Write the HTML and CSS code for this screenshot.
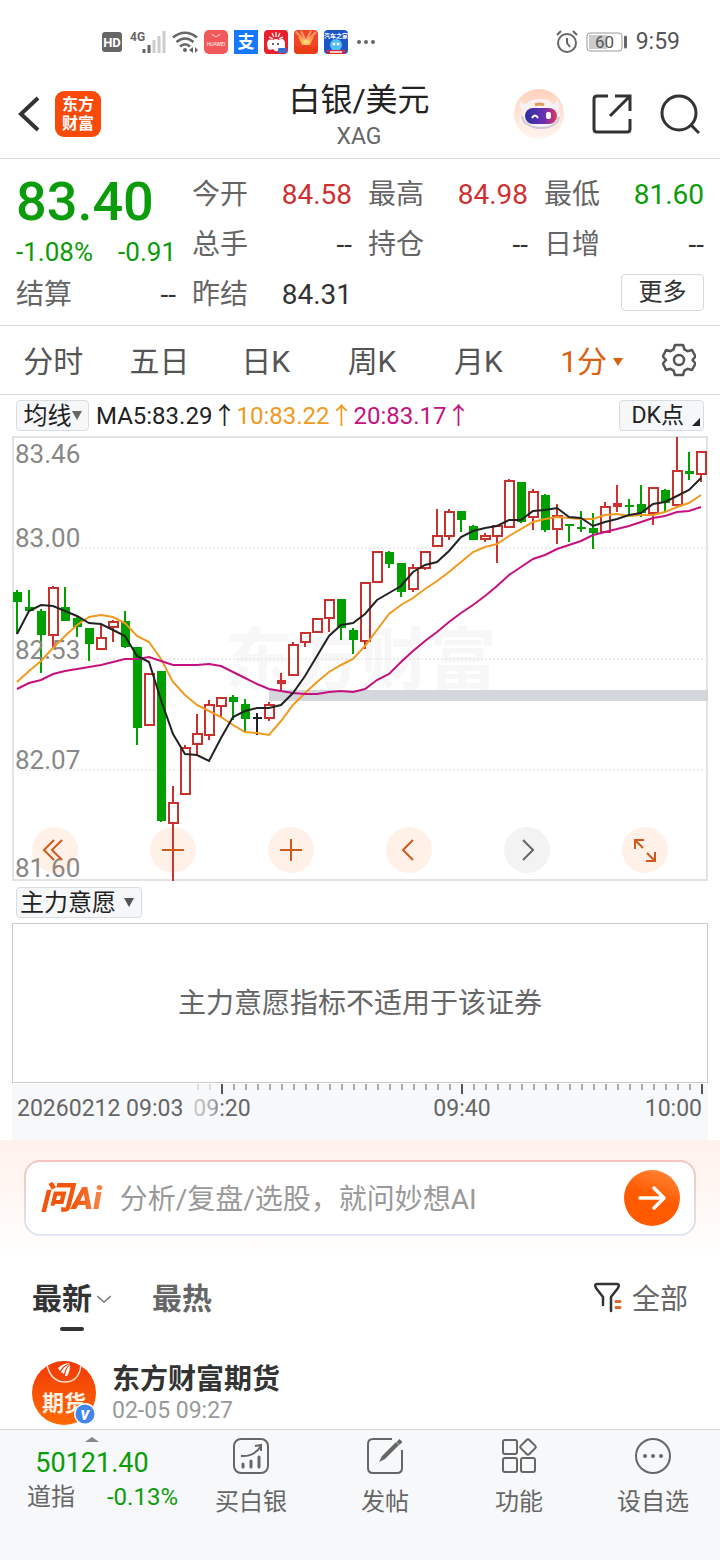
FILE: index.html
```html
<!DOCTYPE html>
<html lang="zh-CN">
<head>
<meta charset="utf-8">
<meta name="viewport" content="width=device-width, initial-scale=1">
<title>白银/美元 XAG</title>
<link rel="stylesheet" href="styles.css">
</head>
<body>

<div class="statusbar">
  <div class="status-left">
    <svg class="hd" width="20" height="20" viewBox="0 0 20 20"><rect width="20" height="20" rx="3" fill="#666"/><text x="10" y="15" text-anchor="middle" font-size="13" font-weight="700" fill="#fff">HD</text></svg>
    <svg class="signal" width="36" height="26" viewBox="0 0 36 26"><text x="0" y="12" font-size="12" font-weight="700" fill="#666">4G</text><path d="M14 24v-4M19 24v-8" stroke="#666" stroke-width="3"/><path d="M24 24V11M29 24V7M34 24V2" stroke="#ccc" stroke-width="3"/></svg>
    <svg class="wifi" width="26" height="24" viewBox="0 0 26 24" fill="none" stroke="#666" stroke-width="2.6"><path d="M1 7.500Q13-2 25 7.500M4.500 12Q13 5 21.500 12M8 16.500Q13 12 18 16.500"/><circle cx="13" cy="20" r="2" fill="#666" stroke="none"/><path d="M21 17v6l-4-3zM23 17v6l3-3z" fill="#666" stroke="none"/></svg>
    <svg class="app" viewBox="0 0 24 24"><rect width="24" height="24" rx="5" fill="#f0585c"/><path d="M8 4q4 5 8 0" fill="none" stroke="#fbd0d0" stroke-width="1.200"/><text x="12" y="16" text-anchor="middle" font-size="5" font-weight="400" fill="#fff">HUAWEI</text></svg>
    <svg class="app" viewBox="0 0 24 24"><rect width="24" height="24" fill="#1677ff"/><text x="12" y="18" text-anchor="middle" font-size="17" font-weight="700" fill="#fff">支</text></svg>
    <svg class="app" viewBox="0 0 24 24"><rect width="24" height="24" rx="4" fill="#e5202c"/><path d="M3 13q1-5 6-3 3-2 6 0 5-3 6 3v5q-6 5-17 2z" fill="#fff"/><path d="M8 3l2 4M12 2v5M16 3l-2 4M5 7l4 2M19 7l-4 2" stroke="#ffd9d9" stroke-width="1.500"/><circle cx="9" cy="14" r="1" fill="#333"/><circle cx="14" cy="14" r="1" fill="#333"/><path d="M1 18q5 3 8 1l3 3v2H4q-4 0-3-6z" fill="#e5202c"/><rect x="14" y="18" width="9" height="5" rx="1" fill="#3a6fd0"/></svg>
    <svg class="app" viewBox="0 0 24 24"><rect width="24" height="24" rx="4" fill="#f0452b"/><path d="M2 2l8 8M22 2l-8 8M7 1l4 8M17 1l-4 8" stroke="#ff9b64" stroke-width="2"/><path d="M4 6l5 4h6l5-4-4 9H8z" fill="#ffb347"/><circle cx="12" cy="12" r="3" fill="#ffd27a"/><path d="M0 15q6 4 12 1 6 3 12-1v6q-1 3-4 3H4q-3 0-4-3z" fill="#e93c14"/></svg>
    <svg class="app" viewBox="0 0 24 24"><rect width="24" height="24" rx="4" fill="#1d55c9"/><text x="12" y="8" text-anchor="middle" font-size="6" font-weight="700" fill="#fff">汽车之家</text><circle cx="12" cy="15" r="6" fill="#4fc0f5"/><circle cx="10" cy="14" r="1.500" fill="#fff"/><circle cx="14" cy="14" r="1.500" fill="#fff"/><path d="M2 20h20q-1 4-4 4H6q-3 0-4-4z" fill="#d92b3a"/><path d="M6 22h12" stroke="#fff" stroke-width="1.500"/></svg>
    <svg class="more-dots" width="18" height="4" viewBox="0 0 18 4" fill="#666"><circle cx="2" cy="2" r="2"/><circle cx="9" cy="2" r="2"/><circle cx="16" cy="2" r="2"/></svg>
  </div>
  <div class="status-right">
    <svg width="22" height="24" viewBox="0 0 22 24" fill="none" stroke="#666" stroke-width="2"><circle cx="11" cy="13" r="9"/><path d="M11 8v5l3 4M1 5l4-4M21 5l-4-4"/></svg>
    <svg width="42" height="20" viewBox="0 0 42 20"><rect x="1" y="1" width="35" height="18" rx="3" fill="#fff" stroke="#999"/><rect x="3" y="3" width="18" height="14" fill="#ccc"/><path d="M39.500 5v10" stroke="#666" stroke-width="3" stroke-linecap="round"/><text x="18.500" y="16" text-anchor="middle" font-size="17" fill="#555">60</text></svg>
    <span class="clock">9:59</span>
  </div>
</div>

<header class="header">
  <div class="header-left">
    <button class="icon-btn" aria-label="返回"><svg width="22" height="36" viewBox="0 0 22 36" fill="none" stroke="#333" stroke-width="4"><path d="M20 2L3 18l17 16"/></svg></button>
    <a class="brand" href="#">东方<br>财富</a>
  </div>
  <div class="header-title">
    <h1>白银/美元</h1>
    <p>XAG</p>
  </div>
  <div class="header-right">
    <button class="icon-btn" aria-label="AI助手">
      <svg width="50" height="50" viewBox="0 0 50 50">
        <defs>
          <linearGradient id="robotBg" x1="0" y1="0" x2="0" y2="1"><stop offset="0" stop-color="#ffd2bb"/><stop offset="1" stop-color="#fff5f0"/></linearGradient>
          <linearGradient id="visor"><stop offset="0" stop-color="#2e2f9e"/><stop offset=".6" stop-color="#6a2fb4"/><stop offset="1" stop-color="#e2385c"/></linearGradient>
        </defs>
        <circle cx="25" cy="25" r="25" fill="url(#robotBg)"/>
        <path d="M6 11q1 4 6 4 5-5 14-5t13 5q4 0 4-5 4 6 1 12 3 4 2 10-1 4-5 4-6 5-15 5t-14-5q-6 0-6-6 0-4 3-7-5-6-3-12z" fill="#f5f1f4"/>
        <path d="M8 27q1 6 5 8 6 4 14 4t14-4q3-2 4-7" stroke="#cfc6d2" stroke-width="2" fill="none"/>
        <path d="M21 16q5-2 9 0" stroke="#e39b5c" stroke-width="3" fill="none"/>
        <rect x="11" y="19" width="32" height="16" rx="8" fill="url(#visor)"/>
        <path d="M18 29q3-5 6 0" stroke="#fff" stroke-width="2" fill="none"/>
        <rect x="32" y="23" width="5" height="7" rx="2" fill="#fff"/>
      </svg>
    </button>
    <button class="icon-btn" aria-label="分享"><svg width="40" height="40" viewBox="0 0 40 40" fill="none" stroke="#333" stroke-width="3"><path d="M16 2H5Q2 2 2 5v30q0 3 3 3h30q3 0 3-3V25"/><path d="M23 2h15v15M37 3L18 22"/></svg></button>
    <button class="icon-btn" aria-label="搜索"><svg width="40" height="40" viewBox="0 0 40 40" fill="none" stroke="#333" stroke-width="3"><circle cx="19" cy="19" r="17"/><path d="M31 31l8 8"/></svg></button>
  </div>
</header>

<section class="quote">
  <div class="last">
    <strong class="price">83.40</strong>
    <div class="change"><span>-1.08%</span><span>-0.91</span></div>
  </div>
  <div class="cell"><span>今开</span><b class="up">84.58</b></div>
  <div class="cell"><span>最高</span><b class="up">84.98</b></div>
  <div class="cell"><span>最低</span><b class="down">81.60</b></div>
  <div class="cell"><span>总手</span><b>--</b></div>
  <div class="cell"><span>持仓</span><b>--</b></div>
  <div class="cell"><span>日增</span><b>--</b></div>
  <div class="cell"><span>结算</span><b>--</b></div>
  <div class="cell"><span>昨结</span><b>84.31</b></div>
  <div class="cell cell-more"><button class="more">更多</button></div>
</section>

<nav class="periods">
  <button>分时</button>
  <button>五日</button>
  <button>日K</button>
  <button>周K</button>
  <button>月K</button>
  <button class="active">1分<svg width="10" height="8" viewBox="0 0 10 8"><path d="M0 0h10L5 8z" fill="#d9600f"/></svg></button>
  <button class="gear" aria-label="设置"><svg width="34" height="34" viewBox="0 0 34 34" fill="none" stroke="#555" stroke-width="2.500" stroke-linejoin="round"><path d="M13 2h8l1.500 4.500 3 1.700L30 7l3.500 6.500-3 3.500 3 3.500L30 27l-4.500-1.200-3 1.700L21 32h-8l-1.500-4.500-3-1.700L4 27 .9 20.500 4 17 .9 13.500 4 7l4.500 1.200 3-1.700z"/><circle cx="17" cy="17" r="5"/></svg></button>
</nav>

<section class="indicator">
  <button class="tag">均线<svg width="10" height="9" viewBox="0 0 10 9"><path d="M0 0h10L5 9z" fill="#666"/></svg></button>
  <p class="ma"><span>MA5:83.29↑</span><span class="ma10">10:83.22↑</span><span class="ma20">20:83.17↑</span></p>
  <button class="tag tag-dk">DK点<svg width="8" height="8" viewBox="0 0 8 8"><path d="M8 0v8H0z" fill="#222"/></svg></button>
</section>

<section class="chart">
  <svg class="kline" id="kline" viewBox="12 436 696 446">
    <text class="watermark" x="225" y="684">东方财富</text>
    <path class="grid" d="M13 548H707M13 659H707M13 770H707"/>
    <path class="frame" d="M13 437H707V880H13Z"/>
    <rect x="269" y="690" width="439" height="11" fill="#d3d6db"/>
    <g id="candles"></g>
    <g class="scale">
      <text x="15" y="463">83.46</text>
      <text x="15" y="547">83.00</text>
      <text x="15" y="659">82.53</text>
      <text x="15" y="769">82.07</text>
      <text x="15" y="877">81.60</text>
    </g>
    <g id="lines"></g>
  </svg>
  <div class="chart-tools">
    <button aria-label="最左"><svg viewBox="0 0 46 46"><path d="M22 13L12 23l10 10M30 13L20 23l10 10"/></svg></button>
    <button aria-label="缩小"><svg viewBox="0 0 46 46"><path d="M12 23h22"/></svg></button>
    <button aria-label="放大"><svg viewBox="0 0 46 46"><path d="M12 23h22M23 12v22"/></svg></button>
    <button aria-label="左移"><svg viewBox="0 0 46 46"><path d="M27 13L17 23l10 10"/></svg></button>
    <button class="off" aria-label="右移"><svg viewBox="0 0 46 46"><path d="M19 13l10 10-10 10"/></svg></button>
    <button aria-label="全屏"><svg viewBox="0 0 46 46"><path d="M13 22v-9h9M13 13l8 8M33 25v9h-9M33 34l-8-8"/></svg></button>
  </div>
</section>

<section class="sub">
  <button class="tag tag-sub">主力意愿<svg width="10" height="9" viewBox="0 0 10 9"><path d="M0 0h10L5 9z" fill="#555"/></svg></button>
  <p class="sub-empty">主力意愿指标不适用于该证券</p>
  <svg class="axis" viewBox="12 1084 696 56">
    <defs><linearGradient id="fade"><stop offset="0" stop-color="#ccc"/><stop offset=".35" stop-color="#aaa"/><stop offset=".5" stop-color="#666"/></linearGradient></defs>
    <g id="ticks"></g>
    <text x="17" y="1116">20260212 09:03</text>
    <text x="222" y="1116" text-anchor="middle" fill="url(#fade)">09:20</text>
    <text x="462" y="1116" text-anchor="middle">09:40</text>
    <text x="702" y="1116" text-anchor="end">10:00</text>
  </svg>
</section>

<section class="ask">
  <form class="ask-box">
    <label class="ask-logo" for="ask">问Ai</label>
    <input id="ask" type="text" placeholder="分析/复盘/选股，就问妙想AI">
    <button type="button" class="send" aria-label="发送"><svg width="30" height="26" viewBox="0 0 30 26" fill="none" stroke="#fff" stroke-width="3.500" stroke-linecap="round" stroke-linejoin="round"><path d="M3 13h24M17 3l10 10-10 10"/></svg></button>
  </form>
</section>

<main class="feed">
  <div class="feed-tabs">
    <button class="feed-tab current">最新<svg width="14" height="8" viewBox="0 0 14 8" fill="none" stroke="#777" stroke-width="1.500"><path d="M0 1l7 6 7-6"/></svg></button>
    <button class="feed-tab">最热</button>
    <button class="filter"><svg width="30" height="32" viewBox="0 0 30 32" fill="none" stroke="#333" stroke-width="2.500" stroke-linecap="round" stroke-linejoin="round"><path d="M10 23v-8L3 6Q1 2 4 2h20q3 0 1 4l-7 9v14"/><path d="M23 19.500h4M23 25.500h4" stroke="#d9692c" stroke-width="3"/></svg>全部</button>
  </div>
  <article class="post">
    <svg class="avatar" viewBox="0 0 64 64">
      <defs><linearGradient id="av" x1="0" y1="0" x2="0" y2="1"><stop offset="0" stop-color="#f03a08"/><stop offset="1" stop-color="#ff6a00"/></linearGradient></defs>
      <circle cx="32" cy="32" r="32" fill="url(#av)"/>
      <path d="M15 4q4 17 18 17T49 4" fill="none" stroke="#ffe0d0" stroke-width="1.500"/>
      <path d="M26 7q6-5 12-5-7 2-10 8zM29 11q4-7 9-8-5 4-6 10zM33 15q1-8 5-11 0 7-3 11z" fill="#fff"/>
      <text x="32" y="50" text-anchor="middle" font-size="22" font-weight="700" fill="#fff3e6">期货</text>
      <circle cx="53" cy="53" r="11" fill="#fff"/><circle cx="53" cy="53" r="9.500" fill="#4385ea"/>
      <text x="53" y="59" text-anchor="middle" font-size="18" font-style="italic" font-weight="700" fill="#fff">v</text>
    </svg>
    <div>
      <h2>东方财富期货</h2>
      <time>02-05 09:27</time>
    </div>
  </article>
</main>

<footer class="bottombar">
  <a class="index" href="#">
    <svg width="14" height="5" viewBox="0 0 14 5"><path d="M0 5l7-5 7 5z" fill="#888"/></svg>
    <strong>50121.40</strong>
    <span class="index-row"><span>道指</span><em>-0.13%</em></span>
  </a>
  <button><svg viewBox="0 0 36 36"><rect x="1" y="1" width="34" height="34" rx="7"/><path d="M8 18q13 1 20-10M22 8l6-1v6"/><path d="M10 26v3M18 23v6M26 19v10" stroke-width="3" stroke-linecap="round"/></svg>买白银</button>
  <button><svg viewBox="0 0 36 36"><path d="M25 1H6Q1 1 1 6v24q0 5 5 5h24q5 0 5-5V12"/><path d="M12 24l3-6L29 4l3 3-14 14z" fill="#666" stroke="none"/><path d="M31 2.500l3 3" stroke-width="4"/></svg>发帖</button>
  <button><svg viewBox="0 0 36 36"><rect x="2" y="2" width="14" height="14" rx="2"/><rect x="2" y="20" width="14" height="14" rx="2"/><rect x="20" y="20" width="14" height="14" rx="2"/><rect x="21" y="3" width="12" height="12" rx="2" transform="rotate(45 27 9)"/></svg>功能</button>
  <button><svg viewBox="0 0 36 36"><circle cx="18" cy="18" r="17"/><g fill="#666" stroke="none"><circle cx="10" cy="18" r="2"/><circle cx="18" cy="18" r="2"/><circle cx="26" cy="18" r="2"/></g></svg>设自选</button>
</footer>

<script type="text/javascript">
// one row per minute from 09:03: [kind, high, body top, body bottom, low]
// g = falling, r = rising (hollow), s = rising (flat), k = unchanged
var candles = [
  ['g',590,592,602,634],['g',590,607,611,611],['g',609,611,635,673],['r',586,587,636,648],
  ['g',587,607,621,621],['g',617,618,627,637],['g',628,628,644,661],['r',624,637,650,650],
  ['r',620,621,628,642],['g',611,621,647,648],['g',647,647,728,745],['r',673,673,726,726],
  ['g',671,671,821,822],['r',786,802,824,881],['r',745,747,795,795],['r',714,733,745,754],
  ['r',700,704,736,740],['r',697,697,707,718],['g',695,697,702,720],['g',699,704,719,733],
  ['k',713,717,719,735],['r',702,704,719,721],['s',673,680,684,690],['r',642,644,676,676],
  ['r',632,632,643,647],['r',618,618,633,633],['r',599,599,619,632],['g',599,599,628,640],
  ['g',628,630,640,654],['r',582,582,642,649],['r',551,551,583,583],['g',551,552,564,568],
  ['g',563,563,592,597],['r',564,567,590,592],['r',551,551,569,570],['r',509,535,547,547],
  ['r',509,511,537,540],['g',511,511,520,532],['g',525,526,540,540],['r',533,535,540,542],
  ['r',525,525,537,563],['r',479,480,528,528],['g',482,482,522,523],['r',489,491,518,530],
  ['g',494,495,530,532],['r',504,515,530,544],['g',524,524,526,542],['g',511,527,529,532],
  ['g',513,528,533,549],['r',502,506,533,533],['s',485,503,507,512],['g',499,505,507,515],
  ['g',485,504,513,517],['r',487,487,514,525],['g',489,490,503,512],['r',437,470,506,506],
  ['g',452,471,474,480],['r',451,451,475,482]
];

var averages = {
  '#f09a20': [682,671,661,648,636,625,617,615,617,623,636,642,659,682,695,705,711,717,725,732,733,735,721,705,693,682,672,665,659,646,630,614,605,598,589,581,572,562,552,547,544,536,529,522,519,517,518,519,519,515,514,516,515,515,512,507,503,495],
  '#c5127f': [689,683,680,674,671,669,667,665,662,659,659,657,661,665,665,665,664,666,672,678,684,689,691,693,694,694,692,691,692,689,680,674,662,651,641,632,622,613,605,596,586,575,567,559,555,549,545,541,535,532,529,526,522,518,516,512,511,507],
  '#222222': [634,611,605,606,611,616,623,624,630,636,656,662,700,734,754,755,761,738,717,711,708,708,705,693,676,656,636,625,623,614,600,593,586,572,565,562,551,537,531,528,526,520,520,511,510,508,517,518,526,522,519,515,513,504,502,496,490,478]
};

var colors = { g: '#00a000', r: '#c8322e', s: '#d03030', k: '#222' };
var step = 12;
var firstX = 17;

function drawCandles() {
  var out = '';
  for (var i = 0; i < candles.length; i++) {
    var c = candles[i];
    var x = firstX + i * step;
    var color = colors[c[0]];
    if (c[0] == 'r') {
      out += '<path d="M' + x + ' ' + c[1] + 'V' + c[2] + 'M' + x + ' ' + c[3] + 'V' + c[4] + '" stroke="' + color + '" stroke-width="2"/>';
      out += '<rect x="' + (x - 4) + '" y="' + (c[2] + 1) + '" width="9" height="' + (c[3] - c[2] - 2) + '" fill="none" stroke="' + color + '" stroke-width="2"/>';
    } else {
      out += '<path d="M' + x + ' ' + c[1] + 'V' + c[4] + '" stroke="' + color + '" stroke-width="2"/>';
      out += '<rect x="' + (x - 4) + '" y="' + c[2] + '" width="9" height="' + (c[3] - c[2]) + '" fill="' + color + '"/>';
    }
  }
  document.getElementById('candles').innerHTML = out;
}

function drawLines() {
  var out = '';
  for (var color in averages) {
    var points = averages[color].map(function (y, i) {
      return (firstX + i * step) + ',' + y;
    });
    out += '<polyline points="' + points.join(' ') + '" fill="none" stroke="' + color + '" stroke-width="2"/>';
  }
  document.getElementById('lines').innerHTML = out;
}

function drawTicks() {
  var out = '';
  for (var i = 15; i < candles.length; i++) {
    var x = firstX + i * step + 1;
    var major = (i + 3) % 20 == 0;
    var color = major ? '#555' : (i < 17 ? '#ddd' : '#aaa');
    out += '<path d="M' + x + ' 1084v' + (major ? 10 : 6) + '" stroke="' + color + '" stroke-width="2"/>';
  }
  document.getElementById('ticks').innerHTML = out;
}

drawCandles();
drawLines();
drawTicks();
</script>
</body>
</html>
```
FILE: styles.css
```css
* {
  box-sizing: border-box;
}
body {
  margin: 0;
  min-height: 100vh;
  display: flex;
  flex-direction: column;
  background-color: #fff;
  color: #333;
  font-family: Roboto, "Noto Sans CJK SC", sans-serif;
  font-size: 24px;
  line-height: 32px;
}
h1, h2, p {
  margin: 0;
  font-weight: 400;
}
button, input {
  font: inherit;
  color: inherit;
  padding: 0;
  border: 0;
  background: none;
}
a {
  color: inherit;
  text-decoration: none;
}
svg {
  display: block;
  flex: none;
}

/* status bar */
.statusbar {
  display: flex;
  justify-content: space-between;
  align-items: center;
  height: 70px;
  padding: 14px 40px 0 102px;
}
.status-left, .status-right {
  display: flex;
  align-items: center;
}
.status-left {
  gap: 6px;
}
.status-right {
  gap: 8px;
  color: #555;
}
.clock {
  font-size: 23px;
}
.app {
  width: 24px;
  height: 24px;
}
.hd {
  margin-right: 2px;
}
.more-dots {
  margin-left: 3px;
}

/* title bar */
.header {
  display: grid;
  grid-template-columns: 1fr auto 1fr;
  align-items: center;
  height: 89px;
  padding: 0 20px 0 18px;
  border-bottom: 1px solid #d8d8d8;
}
.header-left {
  display: flex;
  align-items: center;
  gap: 15px;
}
.brand {
  width: 46px;
  height: 46px;
  padding-top: 4px;
  border-radius: 9px;
  background-color: #fa4a0a;
  color: #fff;
  font-size: 16px;
  font-weight: 700;
  line-height: 19px;
  text-align: center;
}
.header-title {
  padding-top: 4px;
  text-align: center;
}
.header-title h1 {
  color: #222;
  font-size: 32px;
  line-height: 42px;
}
.header-title p {
  color: #666;
  font-size: 23px;
}
.header-right {
  display: flex;
  justify-content: flex-end;
  align-items: center;
  gap: 28px;
}

/* quote table */
.quote {
  display: grid;
  grid-template-columns: repeat(4, 1fr);
  grid-auto-rows: 50px;
  column-gap: 16px;
  padding: 11px 16px 5px;
  border-bottom: 1px solid #d8d8d8;
}
.last {
  grid-row: span 2;
  color: #0a9c0a;
}
.price {
  display: block;
  padding-top: 5px;
  font-size: 54px;
  font-weight: 500;
  line-height: 54px;
}
.change {
  display: flex;
  justify-content: space-between;
  padding-top: 7px;
  font-size: 26px;
}
.cell {
  display: flex;
  justify-content: space-between;
  align-items: center;
  font-size: 28px;
  color: #666;
}
.cell b {
  color: #333;
  font-weight: 400;
}
.cell .up {
  color: #d03030;
}
.cell .down {
  color: #0a9c0a;
}
.cell-more {
  grid-column: 4;
  justify-content: flex-end;
  padding-bottom: 6px;
}
.more {
  width: 83px;
  height: 37px;
  border: 1px solid #d5d8dc;
  border-radius: 4px;
  color: #333;
  font-size: 24px;
}

/* period tabs */
.periods {
  display: flex;
  height: 69px;
  padding-right: 14px;
  border-bottom: 1px solid #d8d8d8;
}
.periods button {
  flex: 106;
  padding-top: 4px;
  color: #555;
  font-size: 30px;
}
.periods .active {
  flex: 120;
  display: flex;
  justify-content: center;
  align-items: center;
  gap: 6px;
  color: #d9600f;
}
.periods .gear {
  flex: 54;
  display: flex;
  justify-content: center;
  align-items: center;
  padding-top: 0;
}

/* moving averages */
.indicator {
  display: flex;
  align-items: center;
  height: 41px;
  padding: 0 16px;
}
.tag {
  display: flex;
  align-items: center;
  justify-content: center;
  width: 73px;
  height: 31px;
  border: 1px solid #d9dce0;
  border-radius: 4px;
  background-color: #f6f7f9;
  color: #222;
  line-height: 28px;
}
.tag-dk {
  width: 85px;
  gap: 8px;
  justify-content: flex-end;
  padding-right: 3px;
  margin-left: auto;
  font-size: 23px;
}
.tag-dk svg {
  align-self: flex-end;
  margin-bottom: 4px;
}
.tag-sub {
  width: 126px;
  gap: 8px;
  padding-right: 4px;
  margin-left: 4px;
}
.ma {
  padding-left: 7px;
  color: #222;
  white-space: nowrap;
}
.ma10 {
  color: #f09a20;
}
.ma20 {
  color: #c5127f;
}

/* k-line chart */
.chart {
  position: relative;
  margin: 0 12px;
}
.kline, .axis {
  width: 100%;
  height: auto;
}
.frame {
  fill: none;
  stroke: #e3e3e3;
  stroke-width: 2;
}
.grid {
  stroke: #ddd;
  stroke-dasharray: 2 2;
}
.watermark {
  fill: #f7f7f7;
  font-size: 68px;
  font-weight: 700;
}
.scale {
  fill: #888;
  font-size: 26px;
}
.chart-tools {
  position: absolute;
  left: 20px;
  right: 40px;
  bottom: 9px;
  display: flex;
  justify-content: space-between;
}
.chart-tools button {
  width: 46px;
  height: 46px;
  border-radius: 50%;
  background-color: rgba(255, 96, 0, 0.09);
}
.chart-tools path {
  fill: none;
  stroke: #cf5a1c;
  stroke-width: 2;
}
.chart-tools .off {
  background-color: #f3f3f3;
}
.chart-tools .off path {
  stroke: #666;
}

/* sub chart */
.sub {
  padding: 5px 12px 0;
}
.sub-empty {
  height: 160px;
  margin-top: 5px;
  border: 1px solid #ccc;
  color: #666;
  font-size: 28px;
  line-height: 160px;
  text-align: center;
}
.axis {
  margin-top: 1px;
  background-color: #f7f8fa;
  fill: #666;
  font-size: 23px;
}

/* ask ai */
.ask {
  padding: 20px 24px 24px;
  background: linear-gradient(#fff1eb, #fff);
}
.ask-box {
  display: flex;
  align-items: center;
  height: 76px;
  padding: 0 14px;
  border: 2px solid transparent;
  border-radius: 16px;
  background: linear-gradient(#fff, #fff) padding-box, linear-gradient(#f5c4bc, #dfe5f2) border-box;
}
.ask-logo {
  padding-right: 4px;
  background: linear-gradient(90deg, #f2550c 50%, #fa8a50);
  background-clip: text;
  color: transparent;
  font-size: 32px;
  font-style: italic;
  font-weight: 900;
}
.ask-box input {
  flex: 1;
  min-width: 0;
  height: 48px;
  padding-top: 3px;
  margin-left: 14px;
  outline: 0;
  font-size: 28px;
}
.ask-box input::placeholder {
  color: #999;
}
.send {
  display: flex;
  align-items: center;
  justify-content: center;
  width: 56px;
  height: 56px;
  border-radius: 50%;
  background: linear-gradient(20deg, #ff5a00 50%, #ff8a3c);
}

/* feed */
.feed {
  flex: 1;
  padding: 17px 32px 0;
}
.feed-tabs {
  display: flex;
  align-items: flex-start;
  height: 84px;
}
.feed-tab {
  position: relative;
  display: flex;
  align-items: center;
  gap: 5px;
  height: 54px;
  padding-bottom: 10px;
  margin-right: 41px;
  color: #666;
  font-size: 30px;
  font-weight: 700;
}
.current {
  color: #333;
}
.current::after {
  content: "";
  position: absolute;
  left: 28px;
  bottom: 0;
  width: 24px;
  height: 4px;
  border-radius: 2px;
  background-color: #333;
}
.filter {
  display: flex;
  align-items: center;
  gap: 9px;
  height: 46px;
  margin-left: auto;
  color: #666;
  font-size: 28px;
}
.filter svg {
  margin-bottom: 4px;
}
.post {
  display: flex;
  gap: 16px;
  padding-bottom: 4px;
}
.avatar {
  width: 64px;
  height: 64px;
}
.post h2 {
  font-size: 28px;
  font-weight: 700;
  line-height: 38px;
}
.post time {
  display: block;
  color: #999;
  font-size: 23px;
  line-height: 24px;
}

/* bottom bar */
.bottombar {
  display: flex;
  align-items: flex-start;
  height: 131px;
  padding-top: 7px;
  border-top: 1px solid #d5d7da;
  background-color: #f7f8fa;
}
.bottombar button {
  flex: 134;
  color: #666;
}
.bottombar button svg {
  width: 36px;
  height: 36px;
  margin: 1px auto 12px;
  fill: none;
  stroke: #666;
  stroke-width: 2;
}
.index {
  flex: 184;
  display: flex;
  flex-direction: column;
  align-items: center;
}
.index strong {
  margin-top: 4px;
  color: #0a9c0a;
  font-size: 27px;
  font-weight: 400;
  line-height: 34px;
}
.index-row {
  display: flex;
  justify-content: space-between;
  align-self: stretch;
  padding: 1px 6px 0 27px;
  color: #666;
}
.index em {
  color: #0a9c0a;
  font-style: normal;
}
```
